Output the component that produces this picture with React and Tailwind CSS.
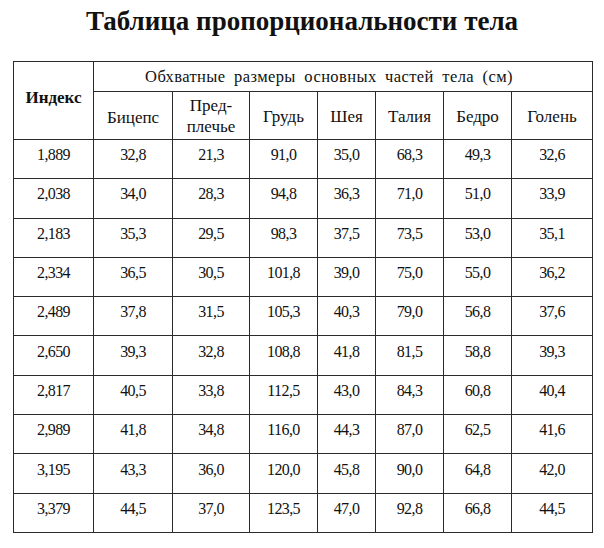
const cols = [80, 79, 77, 68, 58, 68, 68, 81];

const rows = [
  ["1,889", "32,8", "21,3", "91,0", "35,0", "68,3", "49,3", "32,6"],
  ["2,038", "34,0", "28,3", "94,8", "36,3", "71,0", "51,0", "33,9"],
  ["2,183", "35,3", "29,5", "98,3", "37,5", "73,5", "53,0", "35,1"],
  ["2,334", "36,5", "30,5", "101,8", "39,0", "75,0", "55,0", "36,2"],
  ["2,489", "37,8", "31,5", "105,3", "40,3", "79,0", "56,8", "37,6"],
  ["2,650", "39,3", "32,8", "108,8", "41,8", "81,5", "58,8", "39,3"],
  ["2,817", "40,5", "33,8", "112,5", "43,0", "84,3", "60,8", "40,4"],
  ["2,989", "41,8", "34,8", "116,0", "44,3", "87,0", "62,5", "41,6"],
  ["3,195", "43,3", "36,0", "120,0", "45,8", "90,0", "64,8", "42,0"],
  ["3,379", "44,5", "37,0", "123,5", "47,0", "92,8", "66,8", "44,5"],
];

const cell = "border border-[#2b2b2b] text-center align-middle p-0";

export default function App() {
  return (
    <div className="w-[604px] h-[548px] bg-white text-[#111] font-['Liberation_Serif','Times_New_Roman',serif] overflow-hidden">
      <h1 className="pt-[4px] text-center text-[27px] leading-[34px] font-bold">
        Таблица пропорциональности тела
      </h1>

      <table className="mt-[23px] ml-[13px] table-fixed border-collapse">
        <colgroup>
          {cols.map((w, i) => (
            <col key={i} style={{ width: w }} />
          ))}
        </colgroup>
        <thead>
          <tr className="h-[30px]">
            <th rowSpan={2} className={`${cell} text-[17px] font-bold pb-[6px]`}>
              Индекс
            </th>
            <th colSpan={7} className={`${cell} text-[16.5px] font-normal tracking-[0.4px] [word-spacing:4px] pt-[1px] pr-[28px]`}>
              Обхватные размеры основных частей тела (см)
            </th>
          </tr>
          <tr className="h-[48px] text-[17px] font-normal">
            <th className={`${cell} font-normal pt-[4px]`}>Бицепс</th>
            <th className={`${cell} font-normal leading-[21px]`}>
              Пред-
              <br />
              плечье
            </th>
            <th className={`${cell} font-normal pt-[2px]`}>Грудь</th>
            <th className={`${cell} font-normal pt-[2px]`}>Шея</th>
            <th className={`${cell} font-normal pt-[2px]`}>Талия</th>
            <th className={`${cell} font-normal pt-[2px]`}>Бедро</th>
            <th className={`${cell} font-normal pt-[2px]`}>Голень</th>
          </tr>
        </thead>
        <tbody>
          {rows.map((r, i) => (
            <tr key={i} className="h-[39.3px] text-[16px] tracking-[-0.6px]">
              {r.map((v, j) => (
                <td key={j} className={`${cell} pb-[8px]`}>
                  {v}
                </td>
              ))}
            </tr>
          ))}
        </tbody>
      </table>
    </div>
  );
}
